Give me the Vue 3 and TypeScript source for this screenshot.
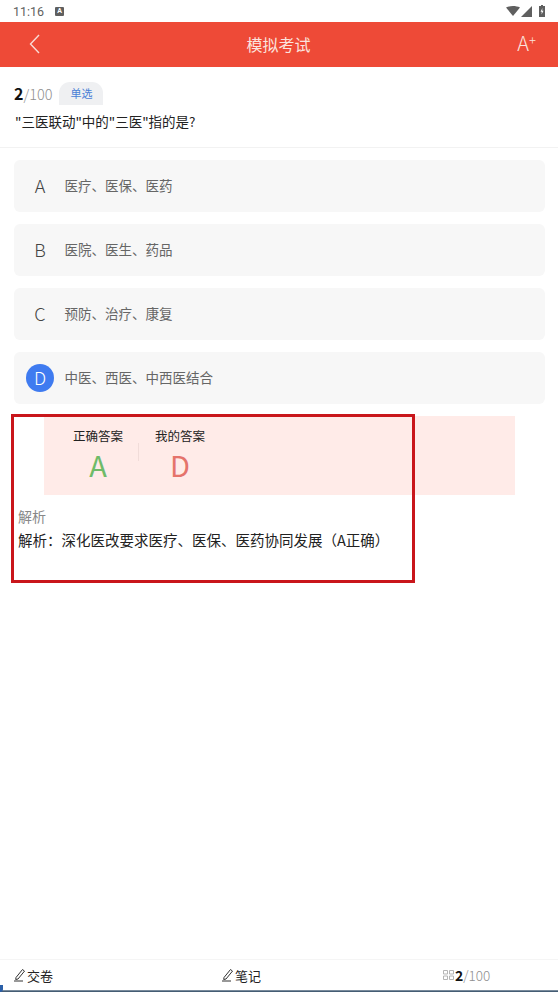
<script setup lang="ts">
const options = [
  { key: 'A', text: '医疗、医保、医药' },
  { key: 'B', text: '医院、医生、药品' },
  { key: 'C', text: '预防、治疗、康复' },
  { key: 'D', text: '中医、西医、中西医结合' },
]
const selected = 'D'
</script>

<template>
  <div class="page">
    <div class="status">
      <div class="status-left">
        <span class="clock">11:16</span>
        <span class="a-icon">A</span>
      </div>
      <div class="status-right">
        <svg width="14" height="10" viewBox="0 0 14 10"><path d="M0 1.5C4 -.5 10 -.5 14 1.500L7 10z" fill="#5f5f5f" /></svg>
        <svg width="11" height="11" viewBox="0 0 11 11"><path d="M11 0v11H0z" fill="#5f5f5f" /></svg>
        <svg class="batt" width="6" height="12" viewBox="0 0 6 12"><path d="M2 0h2v1h2v11H0V1h2z" fill="#5f5f5f" /><path d="M3.400 3 1.600 6.800h1.200L2.500 9.500l2-3.800H3.200z" fill="#fff" /></svg>
      </div>
    </div>

    <header class="bar">
      <svg class="back" width="14" height="20" viewBox="0 0 14 20" fill="none"><path d="M11 1 2.500 10l8.500 9" stroke="#f9dcd6" stroke-width="1.400" /></svg>
      <span class="title">模拟考试</span>
      <span class="font-size">A<sup>+</sup></span>
    </header>

    <section class="question">
      <div class="meta">
        <span class="count"><b>2</b>/100</span>
        <span class="tag">单选</span>
      </div>
      <p class="stem">"三医联动"中的"三医"指的是?</p>
    </section>

    <div class="options">
      <div v-for="o in options" :key="o.key" class="option">
        <span class="letter" :class="{ 'letter--on': o.key === selected }">{{ o.key }}</span>
        <span class="opt-text">{{ o.text }}</span>
      </div>
    </div>

    <div class="answers">
      <div class="answer">
        <span class="answer-label">正确答案</span>
        <span class="answer-val answer-val--ok">A</span>
      </div>
      <i class="answer-sep"></i>
      <div class="answer">
        <span class="answer-label">我的答案</span>
        <span class="answer-val answer-val--bad">D</span>
      </div>
    </div>

    <div class="analysis">
      <div class="analysis-head">解析</div>
      <div class="analysis-body">解析：深化医改要求医疗、医保、医药协同发展（A正确）</div>
    </div>

    <div class="spacer"></div>

    <footer class="foot">
      <div class="foot-item">
        <svg width="13" height="14" viewBox="0 0 13 14" fill="none" stroke="#333" stroke-width="1"><path d="M3 9.500 9.500 1.500l2 1.600L5 11l-2.300.5zM1 13h9" /></svg>
        <span>交卷</span>
      </div>
      <div class="foot-item">
        <svg width="13" height="14" viewBox="0 0 13 14" fill="none" stroke="#333" stroke-width="1"><path d="M3 9.500 9.500 1.500l2 1.600L5 11l-2.300.5zM1 13h9" /></svg>
        <span>笔记</span>
      </div>
      <div class="foot-item foot-count">
        <svg width="11" height="10" viewBox="0 0 11 10" fill="none" stroke="#b5b5b5" stroke-width="1"><path d="M.5.500h4v3.500h-4zM6.500.500h4v3.500h-4zM.5 6h4v3.500h-4zM6.500 6h4v3.500h-4z" /></svg>
        <span class="count count--small"><b>2</b>/100</span>
      </div>
    </footer>
    <div class="edge"></div>
    <div class="corner"></div>

    <div class="mark"></div>
  </div>
</template>

<style scoped>
.page {
  position: relative;
  width: 558px;
  height: 992px;
  display: flex;
  flex-direction: column;
  background: #fff;
  overflow: hidden;
  font-family: "Noto Sans CJK SC", "Noto Sans", sans-serif;
}

.status {
  height: 22px;
  display: flex;
  align-items: center;
  justify-content: space-between;
  padding: 0 13px;
  flex-shrink: 0;
}
.status-left { display: flex; align-items: center; gap: 11px; }
.status-right { display: flex; align-items: center; gap: 1px; }
.batt { margin-left: 6px; }
.clock { font-size: 12.500px; color: #5f5f5f; font-family: Roboto, sans-serif; }
.a-icon {
  width: 9px;
  height: 9px;
  background: #5f5f5f;
  color: #fff;
  font-family: Roboto, sans-serif;
  font-size: 7px;
  font-weight: 700;
  line-height: 9px;
  text-align: center;
  border-radius: 1px;
}

.bar {
  height: 45px;
  flex-shrink: 0;
  display: flex;
  align-items: center;
  justify-content: center;
  position: relative;
  background: #ee4a37;
}
.back { position: absolute; left: 28px; top: 12px; }
.title { font-size: 16px; line-height: 24px; margin: -2px 0 0 -1px; color: #fbe3de; }
.font-size {
  position: absolute;
  right: 22px;
  top: 8px;
  font-size: 20px;
  line-height: 26px;
  font-weight: 300;
  color: #fbe3de;
}
.font-size sup { font-size: 13px; line-height: 0; vertical-align: 6px; }

.question {
  flex-shrink: 0;
  height: 81px;
  padding: 15px 14px 0;
  box-sizing: border-box;
  border-bottom: 1px solid #f2f2f2;
}
.meta { display: flex; align-items: center; gap: 7px; height: 23px; }
.count { font-size: 14.500px; font-weight: 300; line-height: 23px; color: #8f8f8f; }
.count b { color: #111; font-weight: 700; font-size: 16px; }
.tag {
  width: 44px;
  height: 23px;
  line-height: 23px;
  text-align: center;
  background: #eff0f2;
  border-radius: 11px 11px 0 0;
  font-size: 11px;
  color: #4a7fd6;
}
.stem { margin: 6px 0 0 1px; font-size: 13.500px; line-height: 20px; color: #222; }

.options {
  flex-shrink: 0;
  display: flex;
  flex-direction: column;
  gap: 12px;
  padding: 12px 13px 0 14px;
}
.option {
  height: 52px;
  display: flex;
  align-items: center;
  background: #f7f7f7;
  border-radius: 6px;
  padding-left: 12px;
}
.letter {
  width: 28px;
  height: 28px;
  padding-bottom: 2px;
  box-sizing: border-box;
  margin-right: 11px;
  border-radius: 50%;
  display: flex;
  align-items: center;
  justify-content: center;
  font-size: 18px;
  font-weight: 300;
  color: #444;
}
.letter--on { background: #3f7bf0; color: #fff; }
.opt-text { font-size: 13.500px; line-height: 20px; margin: -2px 0 0 -0.5px; color: #666; }

.answers {
  flex-shrink: 0;
  margin: 12px 43px 0 44px;
  height: 79px;
  background: #ffebe8;
  display: flex;
  padding-left: 29px;
}
.answer {
  width: 50px;
  display: flex;
  flex-direction: column;
  align-items: center;
  padding-top: 11px;
}
.answer-label { font-size: 12.500px; line-height: 18px; color: #222; white-space: nowrap; }
.answer-val { font-size: 29px; line-height: 36px; margin-top: 1px; }
.answer-val--ok { color: #6fbb68; }
.answer-val--bad { color: #e5736b; }
.answer-sep {
  width: 1px;
  height: 18px;
  margin: 27px 16px 0 15px;
  background: #f1dcd9;
}

.analysis { flex-shrink: 0; padding: 11px 0 0 18px; }
.analysis-head { font-size: 14px; line-height: 20px; color: #888; }
.analysis-body { margin-top: 4px; font-size: 14.500px; line-height: 20px; color: #222; }

.spacer { flex: 1; }

.foot {
  flex-shrink: 0;
  height: 31px;
  box-sizing: border-box;
  display: flex;
  align-items: center;
  border-top: 1px solid #f5f5f5;
  font-size: 13px;
  color: #222;
}
.foot-item { display: flex; align-items: center; gap: 1px; }
.foot-item:nth-child(1) { margin-left: 13px; width: 208px; }
.foot-item:nth-child(2) { width: 222px; }
.count--small { font-size: 13.500px; line-height: 18px; }
.count--small b { font-size: 14px; }

.edge {
  flex-shrink: 0;
  height: 2px;
  background: linear-gradient(#93a2b0, #2b4660);
}
.corner {
  position: absolute;
  left: 0;
  bottom: 0;
  width: 3px;
  height: 7px;
  background: #2a5fa8;
  border-radius: 0 0 3px 0 / 0 0 3px 0;
}

.mark {
  position: absolute;
  left: 11px;
  top: 414px;
  width: 404px;
  height: 169px;
  box-sizing: border-box;
  border: 3px solid #c9161b;
  pointer-events: none;
}
</style>
